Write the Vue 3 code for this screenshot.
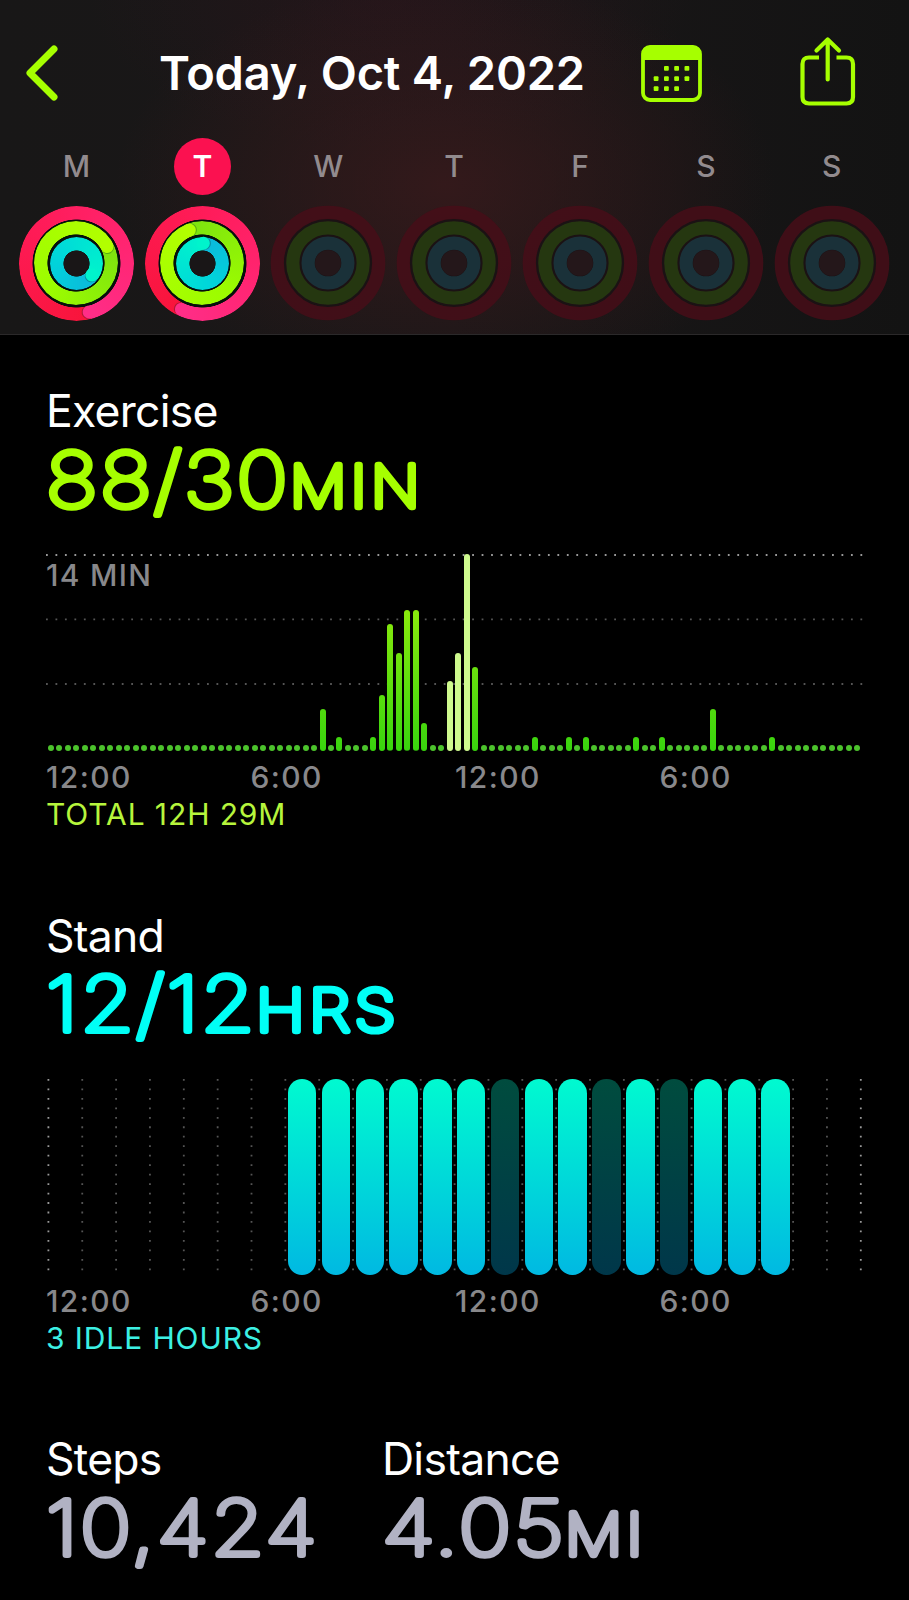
<script setup>
const days = [
  { name: 'M', active: false, rings: { move: 165, exercise: 62, stand: 127 } },
  { name: 'T', active: true, rings: { move: 204, exercise: 339, stand: 4 } },
  { name: 'W', active: false, rings: null },
  { name: 'T', active: false, rings: null },
  { name: 'F', active: false, rings: null },
  { name: 'S', active: false, rings: null },
  { name: 'S', active: false, rings: null }
]

const ringShapes = [
  { key: 'move', radius: 50.7, start: '#f8143a', mid: '#ff1c5a', end: '#ff2d87', empty: '#460e18' },
  { key: 'exercise', radius: 35.2, start: '#7ce210', mid: '#9cfc00', end: '#b2ff00', empty: '#273c10' },
  { key: 'stand', radius: 19.9, start: '#0cb8dc', mid: '#00d6da', end: '#00f4cc', empty: '#1a363f' }
]

const ringGradient = (ring, angle) => ({
  background: `conic-gradient(from ${angle}deg, ${ring.start}, ${ring.mid} 45%, ${ring.end})`
})

// Exercise minutes for each quarter hour, keyed by slot
const activeSlots = {
  32: 3, 34: 1, 38: 1, 39: 4, 40: 9, 41: 7, 42: 10, 43: 10, 44: 2,
  47: 5, 48: 7, 49: 14, 50: 6, 57: 1, 61: 1, 63: 1, 69: 1, 72: 1, 78: 3, 85: 1
}
const workoutSlots = [47, 48, 49]
const maxMinutes = 14

const exerciseBars = Array.from({ length: 96 }, (_, slot) => {
  const minutes = activeSlots[slot] || 0
  return {
    slot,
    empty: minutes === 0,
    workout: workoutSlots.includes(slot),
    height: (minutes / maxMinutes) * 100
  }
})

const idleHours = [13, 16, 18]
const standHours = Array.from({ length: 24 }, (_, hour) => {
  if (hour < 7 || hour > 21) return 'none'
  return idleHours.includes(hour) ? 'idle' : 'stood'
})

const axisLabels = ['12:00', '6:00', '12:00', '6:00']
</script>

<template>
  <main class="screen">
    <header class="header">
      <nav class="nav">
        <svg class="back" width="36" height="58" viewBox="0 0 36 58">
          <path d="M30 5 L6 29 L30 53" />
        </svg>
        <h1>Today, Oct 4, 2022</h1>
        <svg class="calendar" width="62" height="58" viewBox="0 0 62 58">
          <rect class="frame" x="2" y="2" width="57" height="53" rx="7" />
          <path class="solid" d="M1 15 V9 Q1 1 9 1 H52 Q60 1 60 9 V15 Z" />
          <g class="solid">
            <rect v-for="x in [23, 33.2, 43.5]" :key="`a${x}`" :x="x" y="21" width="4.8" height="4.8" rx="1" />
            <rect v-for="x in [12.7, 23, 33.2, 43.5]" :key="`b${x}`" :x="x" y="31.2" width="4.8" height="4.8" rx="1" />
            <rect v-for="x in [12.7, 23, 33.2]" :key="`c${x}`" :x="x" y="41.2" width="4.8" height="4.8" rx="1" />
          </g>
        </svg>
        <svg class="share" width="56" height="70" viewBox="0 0 56 70">
          <path d="M19 21.5 H9 Q2.5 21.5 2.5 28 V61 Q2.5 67.5 9 67.5 H46.5 Q53 67.5 53 61 V28 Q53 21.5 46.5 21.5 H36.5" />
          <path class="arrow" d="M27.7 43.5 V3.5 M16.5 14.5 L27.7 3.5 L39 14.5" />
        </svg>
      </nav>

      <div class="week">
        <div v-for="(day, index) in days" :key="index" class="day">
          <span class="day-name" :class="{ active: day.active }">{{ day.name }}</span>
          <div class="rings">
            <div v-if="day.rings" class="backing"></div>
            <template v-if="day.rings">
              <div
                v-for="ring in ringShapes"
                :key="ring.key"
                class="ring"
                :class="ring.key"
                :style="ringGradient(ring, day.rings[ring.key])"
              ></div>
            </template>
            <svg width="116" height="116" viewBox="-58 -58 116 116">
              <template v-if="day.rings">
                <g v-for="ring in ringShapes" :key="ring.key" :transform="`rotate(${day.rings[ring.key]})`">
                  <circle class="cap-shadow" cx="1.1" :cy="-ring.radius" r="6.5" />
                  <circle cx="0" :cy="-ring.radius" r="6.5" :fill="ring.end" />
                </g>
              </template>
              <template v-else>
                <circle class="empty-backing" r="44.5" />
                <circle
                  v-for="ring in ringShapes"
                  :key="ring.key"
                  class="empty-ring"
                  :r="ring.radius"
                  :stroke="ring.empty"
                />
                <circle class="empty-center" r="13" />
              </template>
            </svg>
          </div>
        </div>
      </div>
    </header>

    <section class="metric exercise-metric">
      <h2>Exercise</h2>
      <svg class="value" width="816" height="90" viewBox="0 0 816 90">
        <text x="0" y="69" textLength="244" lengthAdjust="spacingAndGlyphs">88/30</text>
        <text class="unit" x="244" y="69" textLength="134" lengthAdjust="spacingAndGlyphs">MIN</text>
      </svg>
      <div class="chart">
        <svg class="grid-lines" width="817" height="197" viewBox="0 0 817 197">
          <line class="strong" x1="0" y1="1" x2="817" y2="1" />
          <line x1="0" y1="65.4" x2="817" y2="65.4" />
          <line x1="0" y1="130" x2="817" y2="130" />
        </svg>
        <span class="chart-max">14 MIN</span>
        <div class="minute-bars">
          <div
            v-for="bar in exerciseBars"
            :key="bar.slot"
            class="minute-bar"
            :class="{ empty: bar.empty, workout: bar.workout }"
            :style="{ height: `${bar.height}%` }"
          ></div>
        </div>
      </div>
      <div class="axis">
        <span v-for="(label, index) in axisLabels" :key="index">{{ label }}</span>
      </div>
      <p class="note total">TOTAL 12H 29M</p>
    </section>

    <section class="metric stand-metric">
      <h2>Stand</h2>
      <svg class="value" width="816" height="90" viewBox="0 0 816 90">
        <text x="0" y="68" textLength="211" lengthAdjust="spacingAndGlyphs">12/12</text>
        <text class="unit" x="210" y="68" textLength="144" lengthAdjust="spacingAndGlyphs">HRS</text>
      </svg>
      <div class="chart">
        <svg class="grid-lines" width="817" height="197" viewBox="0 0 817 197">
          <line
            v-for="n in 25"
            :key="n"
            :class="{ strong: n === 1 || n === 25 }"
            :x1="2.4 + (n - 1) * 33.85"
            y1="0"
            :x2="2.4 + (n - 1) * 33.85"
            y2="193"
          />
        </svg>
        <div class="hour-bars">
          <div v-for="(state, hour) in standHours" :key="hour" class="hour-bar" :class="state"></div>
        </div>
      </div>
      <div class="axis">
        <span v-for="(label, index) in axisLabels" :key="index">{{ label }}</span>
      </div>
      <p class="note idle-note">3 IDLE HOURS</p>
    </section>

    <section class="totals">
      <div class="metric">
        <h2>Steps</h2>
        <svg class="value" width="300" height="90" viewBox="0 0 300 90">
          <text x="0" y="68.5" textLength="273" lengthAdjust="spacingAndGlyphs">10,424</text>
        </svg>
      </div>
      <div class="metric">
        <h2>Distance</h2>
        <svg class="value" width="300" height="90" viewBox="0 0 300 90">
          <text x="0" y="68.5" textLength="184" lengthAdjust="spacingAndGlyphs">4.05</text>
          <text class="unit" x="183" y="68.5" textLength="82" lengthAdjust="spacingAndGlyphs">MI</text>
        </svg>
      </div>
    </section>
  </main>
</template>

<style>
html,
body {
  margin: 0;
  background: #000;
}
</style>

<style scoped>
.screen {
  width: 909px;
  height: 1600px;
  overflow: hidden;
  background: #000;
  color: #fff;
  font-family: Inter, 'Liberation Sans', sans-serif;
}

.header {
  box-sizing: border-box;
  height: 335px;
  padding-top: 36px;
  border-bottom: 1px solid #2b292a;
  background:
    radial-gradient(ellipse 330px 210px at 445px 185px, rgba(62, 26, 28, 0.7), rgba(62, 26, 28, 0)),
    radial-gradient(ellipse 300px 150px at 390px 0, rgba(46, 20, 28, 0.5), rgba(46, 20, 28, 0)),
    linear-gradient(90deg, #181717, #1a1718 50%, #131313);
}

.nav {
  display: flex;
  height: 102px;
}

.nav svg {
  flex: none;
  fill: none;
  stroke: #a6ff00;
}

.back {
  margin: 8px 0 0 24px;
  stroke-width: 7;
  stroke-linecap: round;
  stroke-linejoin: round;
}

h1 {
  width: 480px;
  margin: 8px 0 0 99px;
  font-size: 47px;
  line-height: 58px;
  font-weight: 600;
  letter-spacing: -0.2px;
  white-space: nowrap;
}

.calendar {
  margin: 9px 0 0 1.5px;
}

.calendar .frame {
  stroke-width: 3.8;
}

.calendar .solid {
  fill: #a6ff00;
  stroke: none;
}

.share {
  margin: 0 0 0 97.5px;
  stroke-width: 4.2;
}

.share .arrow {
  stroke-linecap: round;
  stroke-linejoin: round;
}

.week {
  display: flex;
  padding-left: 13.5px;
}

.day {
  flex: none;
  width: 125.9px;
  display: flex;
  flex-direction: column;
  align-items: center;
}

.day-name {
  width: 57px;
  height: 57px;
  border-radius: 50%;
  text-align: center;
  font-size: 30px;
  line-height: 57px;
  font-weight: 550;
  color: #928b8e;
}

.day-name.active {
  background: #fb1150;
  font-weight: 600;
  color: #fff;
}

.rings {
  display: grid;
  place-items: center;
  width: 116px;
  height: 116px;
  margin-top: 10px;
}

.rings > * {
  grid-area: 1 / 1;
}

.rings svg {
  z-index: 1;
}

.backing {
  width: 90px;
  height: 90px;
  border-radius: 50%;
  background: radial-gradient(circle, #191617 13px, #06100c 14px);
}

.ring {
  border-radius: 50%;
}

.move {
  width: 115px;
  height: 115px;
  mask: radial-gradient(circle, transparent 43.7px, #000 44.3px);
}

.exercise {
  width: 84px;
  height: 84px;
  mask: radial-gradient(circle, transparent 28.3px, #000 28.9px);
}

.stand {
  width: 53px;
  height: 53px;
  mask: radial-gradient(circle, transparent 12.8px, #000 13.4px);
}

.cap-shadow {
  fill: rgba(0, 40, 30, 0.3);
}

.empty-ring {
  fill: none;
  stroke-width: 13.2;
  opacity: 0.88;
}

.empty-backing {
  fill: #1b1214;
}

.empty-center {
  fill: #24171a;
}

.metric h2 {
  margin: 0;
  font-size: 44.5px;
  line-height: 54px;
  font-weight: 380;
  letter-spacing: -0.75px;
}

.exercise-metric {
  padding: 49px 0 0 46px;
}

.stand-metric {
  padding: 75px 0 0 46px;
}

.value {
  display: block;
  overflow: visible;
  fill: currentColor;
  stroke: currentColor;
  stroke-width: 6;
  stroke-linejoin: round;
  font-size: 75.5px;
  font-weight: 100;
  letter-spacing: 2px;
}

.value .unit {
  font-size: 57px;
  stroke-width: 6.4;
  letter-spacing: 4px;
}

.exercise-metric .value {
  color: #a6ff00;
}

.stand-metric .value {
  color: #00fff6;
}

.chart {
  display: grid;
  width: 817px;
  height: 197px;
  margin-top: 26px;
}

.chart > * {
  grid-area: 1 / 1;
}

.grid-lines line {
  stroke: #555;
  stroke-width: 1.8;
  stroke-dasharray: 1.8 7.67;
}

.grid-lines .strong {
  stroke: #999;
}

.chart-max {
  padding-top: 3px;
  font-size: 30px;
  line-height: 36px;
  font-weight: 550;
  letter-spacing: 1.3px;
  color: #88888b;
}

.minute-bars {
  display: flex;
  align-items: flex-end;
  gap: 2.495px;
  padding-left: 2px;
}

.minute-bar {
  flex: none;
  width: 6px;
  min-height: 6px;
  border-radius: 3px;
  background: linear-gradient(to top, #38d40e, #aaf20c) bottom / 100% 197px;
}

.minute-bar.empty {
  background: #4cc32c;
}

.minute-bar.workout {
  background: #cffa8e;
}

.hour-bars {
  display: flex;
  padding-left: 2.6px;
}

.hour-bar {
  flex: none;
  width: 28.45px;
  height: 196px;
  margin: 0 2.7px;
  border-radius: 14.2px;
}

.hour-bar.stood {
  background: linear-gradient(#00fad0, #00b9e2);
}

.hour-bar.idle {
  background: linear-gradient(#004c3e, #00374a);
}

.axis {
  display: flex;
  margin-top: 8px;
  font-size: 30px;
  line-height: 36px;
  font-weight: 550;
  letter-spacing: 1.4px;
  color: #88888b;
}

.stand-metric .axis {
  margin-top: 7px;
}

.axis span {
  width: 204.5px;
}

.note {
  margin: 0;
  font-size: 30px;
  line-height: 38px;
  letter-spacing: 0.9px;
}

.total {
  color: #b6f53c;
}

.idle-note {
  color: #3cf0e4;
}

.exercise-metric .note {
  line-height: 39px;
}

.totals {
  display: flex;
  padding: 74.5px 0 0 46px;
}

.totals .metric {
  width: 336px;
}

.totals .value {
  color: #b1b2c3;
}
</style>
